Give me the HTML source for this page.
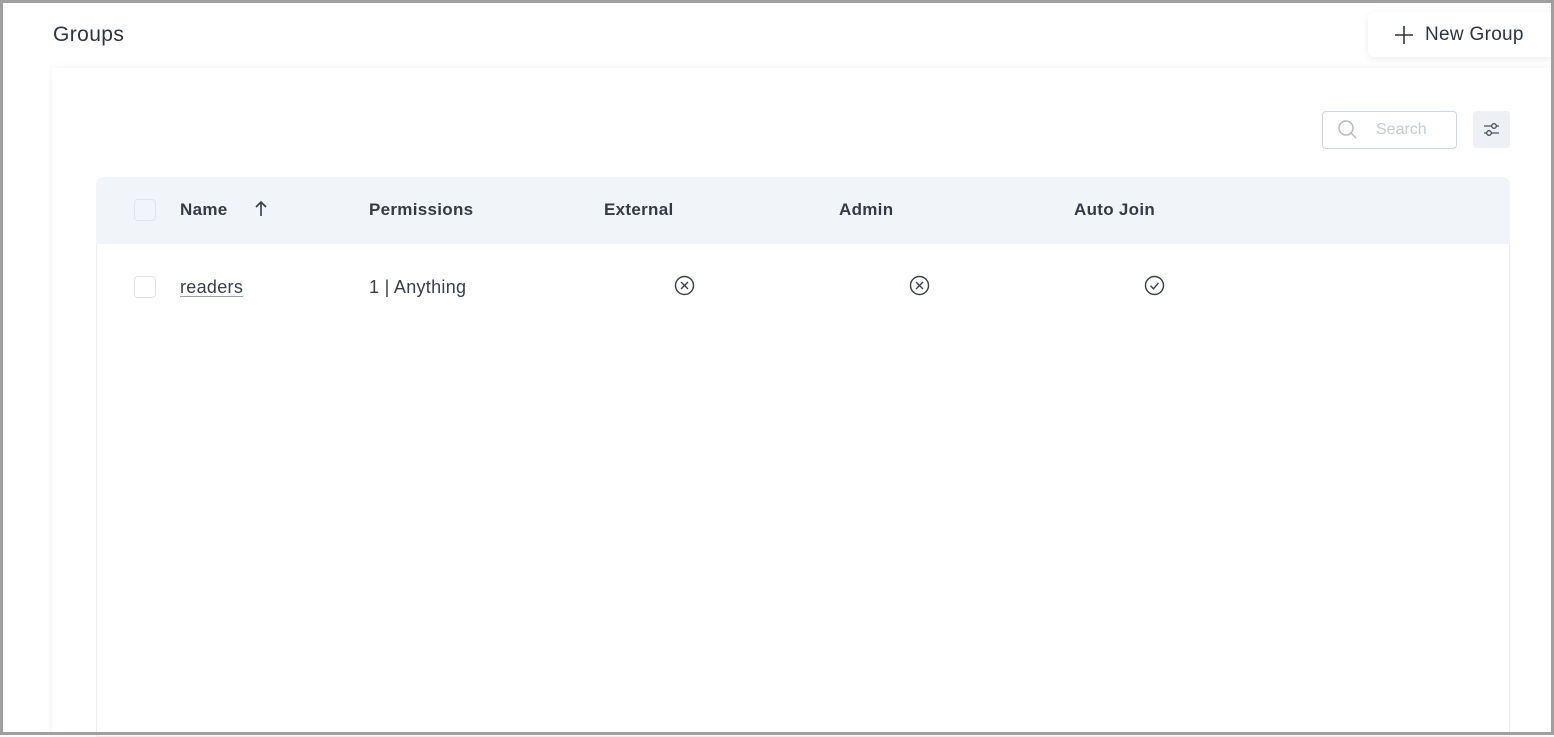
<!DOCTYPE html>
<html><head><style>
*{box-sizing:border-box;margin:0;padding:0}
body{width:1554px;height:735px;overflow:hidden;background:#fff;font-family:"Liberation Sans","DejaVu Sans",sans-serif;position:relative;color:#3a3f4f}
.frame{position:absolute;inset:0;border:3px solid #a0a0a0}
.title{position:absolute;left:53px;top:23px;font-size:21px;color:#2f3442;letter-spacing:0.4px}
.btn{position:absolute;left:1368px;top:12px;width:184px;height:45px;background:#fff;border-radius:6px 0 0 6px;box-shadow:0 2px 8px rgba(0,0,0,.08);font-size:19px;color:#2f3442;display:flex;align-items:center;padding-left:25px;letter-spacing:0.3px}
.card{position:absolute;left:52px;top:68px;width:1499px;height:667px;background:#fff;box-shadow:0 0 8px rgba(0,0,0,.06)}
.search{position:absolute;left:1322px;top:111px;width:135px;height:38px;border:1px solid #cfd4e6;border-radius:4px;font-size:16px;color:#c5cadb}
.filt{position:absolute;left:1473px;top:111px;width:37px;height:37px;background:#eef0f6;border-radius:4px}
.table{position:absolute;left:96px;top:177px;width:1414px;height:560px;border:1px solid #ececf3;border-top:none;border-radius:8px 8px 0 0}
.head{position:absolute;left:96px;top:177px;width:1414px;height:67px;background:#f1f4f8;border-radius:8px 8px 0 0}
.h{position:absolute;top:200px;font-size:17px;font-weight:bold;color:#353a48;letter-spacing:0.3px}
.cb{position:absolute;left:134px;width:22px;height:22px;border:1px solid #e1e3ec;border-radius:4px;background:#fff}
.c{position:absolute;top:277px;font-size:18px;color:#3a3f4f;letter-spacing:0.3px}
</style></head><body>
<div class="title">Groups</div>
<div class="card"></div>
<div class="btn"><svg width="22" height="22" viewBox="0 0 22 22" style="margin-right:10px"><path d="M11 2v18M2 11h18" stroke="#2f3442" stroke-width="1.6"/></svg>New Group</div>
<div class="search"><svg width="24" height="24" viewBox="0 0 24 24" style="position:absolute;left:13px;top:6px"><circle cx="10" cy="10" r="7" fill="none" stroke="#b6bbcc" stroke-width="1.5"/><path d="M15 15l5 5" stroke="#b6bbcc" stroke-width="1.5"/></svg><span style="position:absolute;left:53px;top:9px">Search</span></div>
<div class="filt"><svg width="37" height="37" viewBox="0 0 37 37"><path d="M11 15h15M11 22h15" stroke="#4a4f60" stroke-width="1.3"/><circle cx="21" cy="15" r="2.3" fill="#eef0f6" stroke="#4a4f60" stroke-width="1.3"/><circle cx="16" cy="22" r="2.3" fill="#eef0f6" stroke="#4a4f60" stroke-width="1.3"/></svg></div>
<div class="table"></div>
<div class="head"></div>
<div class="cb" style="top:199px;background:#f1f4f8"></div>
<div class="h" style="left:180px">Name</div>
<svg style="position:absolute;left:253px;top:200px" width="16" height="18" viewBox="0 0 16 18"><path d="M8 2v14M3 7l5-5 5 5" fill="none" stroke="#353a48" stroke-width="1.6"/></svg>
<div class="h" style="left:369px">Permissions</div>
<div class="h" style="left:604px">External</div>
<div class="h" style="left:839px">Admin</div>
<div class="h" style="left:1074px">Auto Join</div>
<div class="cb" style="top:276px"></div>
<div class="c" style="left:180px;text-decoration:underline;text-decoration-color:#9aa0b0;text-underline-offset:3px">readers</div>
<div class="c" style="left:369px">1 | Anything</div>
<svg style="position:absolute;left:674px;top:275px" width="21" height="21" viewBox="0 0 21 21"><circle cx="10.5" cy="10.5" r="9" fill="none" stroke="#3a3f4f" stroke-width="1.4"/><path d="M7 7l7 7M14 7l-7 7" stroke="#3a3f4f" stroke-width="1.4"/></svg>
<svg style="position:absolute;left:909px;top:275px" width="21" height="21" viewBox="0 0 21 21"><circle cx="10.5" cy="10.5" r="9" fill="none" stroke="#3a3f4f" stroke-width="1.4"/><path d="M7 7l7 7M14 7l-7 7" stroke="#3a3f4f" stroke-width="1.4"/></svg>
<svg style="position:absolute;left:1144px;top:275px" width="21" height="21" viewBox="0 0 21 21"><circle cx="10.5" cy="10.5" r="9" fill="none" stroke="#3a3f4f" stroke-width="1.4"/><path d="M6.5 10.8l3 3 5-6" fill="none" stroke="#3a3f4f" stroke-width="1.4"/></svg>
<div class="frame"></div>
</body></html>
